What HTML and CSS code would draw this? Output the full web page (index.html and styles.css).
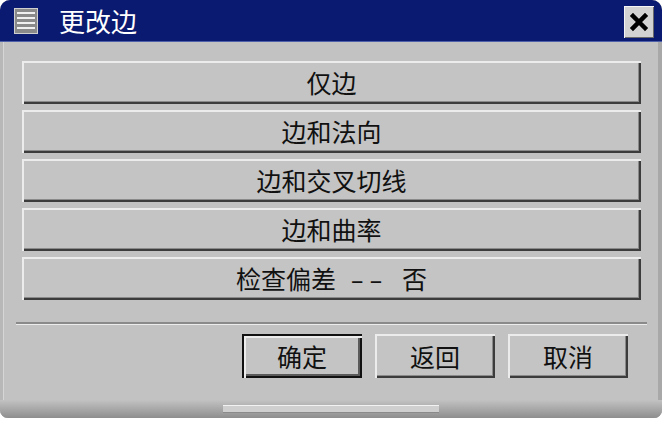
FILE: index.html
```html
<!DOCTYPE html>
<html lang="zh">
<head>
  <meta charset="UTF-8" />
  <title>更改边</title>
  <link rel="stylesheet" href="styles.css">
</head>
<body>
  <div class="window">
    <!-- Title bar -->
    <div class="titlebar">
      <span class="menu-icon">
        <span></span><span></span><span></span><span></span>
      </span>
      <span class="title">更改边</span>
      <button class="close">
        <svg width="20" height="20" viewBox="0 0 20 20">
          <path d="M4 4 L16 16 M16 4 L4 16" stroke="#000" stroke-width="4.5" stroke-linecap="square" />
        </svg>
      </button>
    </div>

    <!-- Options -->
    <div class="options">
      <button class="btn option">仅边</button>
      <button class="btn option">边和法向</button>
      <button class="btn option">边和交叉切线</button>
      <button class="btn option">边和曲率</button>
      <button class="btn option">检查偏差<span class="dash">--</span>否</button>
    </div>

    <div class="separator"></div>

    <div class="actions">
      <button class="btn action default">确定</button>
      <button class="btn action">返回</button>
      <button class="btn action">取消</button>
    </div>

    <div class="grip"></div>
  </div>
</body>
</html>
```

FILE: styles.css
```css
html, body {
  margin: 0;
  padding: 0;
  background: #ffffff;
  font-family: "Noto Sans CJK SC", "Liberation Sans", sans-serif;
}

.window {
  width: 662px;
  height: 418px;
  background: #c2c2c2;
  border-radius: 10px 10px 8px 8px;
  overflow: hidden;
  box-shadow: inset 3px 0 0 #b8b8b8, inset 4px 0 0 #d6d6d6, inset -4px 0 0 #a8a8a8;
  display: flex;
  flex-direction: column;
  position: relative;
}

.window::after {
  content: "";
  position: absolute;
  left: 0;
  right: 0;
  bottom: 0;
  height: 18px;
  background: linear-gradient(#c2c2c2, #8e8e8e);
}

.titlebar {
  height: 42px;
  background: #0a1a70;
  display: flex;
  align-items: center;
  padding: 0 8px 0 14px;
  box-sizing: border-box;
  border-bottom: 1px solid #5060a8;
}

.menu-icon {
  width: 24px;
  height: 26px;
  background: #8a8a8a;
  border: 1px solid #cfcfcf;
  box-sizing: border-box;
  display: flex;
  flex-direction: column;
  justify-content: space-around;
  padding: 2px 2px;
}

.menu-icon span {
  height: 2px;
  background: #f0f0f0;
}

.title {
  color: #ffffff;
  font-size: 26px;
  margin-left: 21px;
  flex: 1;
  line-height: 1;
}

.close {
  width: 30px;
  height: 32px;
  margin-top: 2px;
  padding: 0;
  background: #d2d2d2;
  border: none;
  box-shadow: inset 1px 1px 0 #f4f4f4, inset -1px -1px 0 #6a6a6a;
  display: flex;
  align-items: center;
  justify-content: center;
}

.btn {
  font-family: "Noto Sans CJK SC", "Liberation Sans", sans-serif;
  font-size: 25px;
  color: #111111;
  background: #c4c4c4;
  border: none;
  padding: 0;
  line-height: 1;
  box-shadow:
    inset 2px 2px 0 #ececec,
    inset -2px -2px 0 #3c3c3c,
    inset -3px -3px 0 #8a8a8a;
  white-space: nowrap;
}

.dash {
  display: inline-block;
  width: 66px;
  text-align: center;
  letter-spacing: 3px;
  transform: scaleX(1.6);
}

.options {
  display: flex;
  flex-direction: column;
  gap: 6px;
  padding: 19px 21px 0 22px;
}

.option {
  height: 43px;
  width: 100%;
}

.separator {
  margin: 22px 15px 0 16px;
  height: 1px;
  border-top: 2px solid #8a8a8a;
  background: #ececec;
}

.actions {
  display: flex;
  justify-content: flex-end;
  gap: 13px;
  padding-right: 34px;
  margin-top: 9px;
}

.action {
  width: 120px;
  height: 44px;
}

.action.default {
  box-shadow:
    inset 2px 2px 0 #111,
    inset 4px 4px 0 #ececec,
    inset -2px -2px 0 #111,
    inset -4px -4px 0 #5a5a5a;
}

.grip {
  width: 216px;
  height: 6px;
  margin: 27px 0 0 223px;
  background: #cfcfcf;
  border-top: 1px solid #f2f2f2;
  border-bottom: 1px solid #8a8a8a;
  position: relative;
  z-index: 1;
}
```
